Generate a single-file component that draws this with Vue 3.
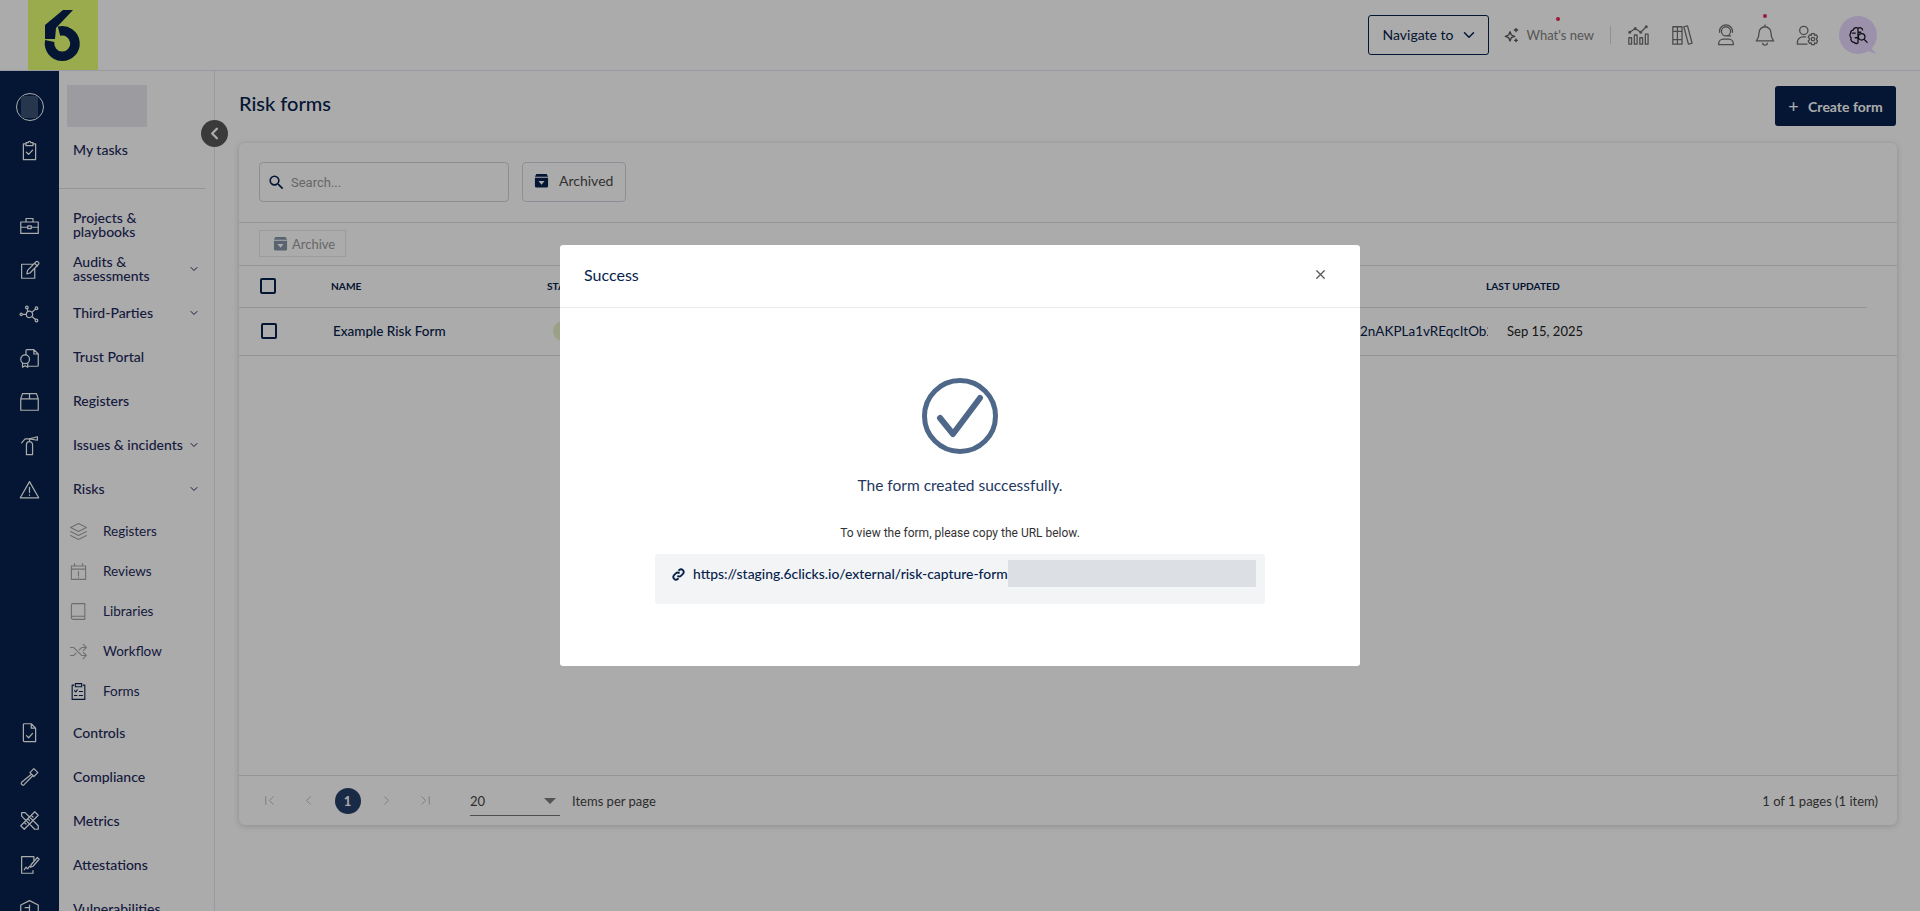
<script setup>
// circle as a path chunk, so one icon stays one d string
const c = (x, y, r) => `M${x - r} ${y}a${r} ${r} 0 1 0 ${2 * r} 0a${r} ${r} 0 1 0 ${-2 * r} 0`

const icons = {
  clipboard: 'M7.5 4.5H5v18h14v-18h-2.5 M8 3h2.5a1.5 1.5 0 0 1 3 0H16v3.5H8z M8.5 14l2.5 2.5 4.5-5',
  briefcase: 'M2 8h20v13H2z M8 8V4h8v4 M2 14h8 M14 14h8 M10 12.5h4v3h-4z',
  pencil: 'M16 6H3v16h15V11 M9 17l.8-4L19.5 3.2a1.5 1.5 0 0 1 2.2 0l.6.6a1.5 1.5 0 0 1 0 2.2L12.6 16z M18 5l3 3',
  nodes: c(12, 13, 3.6) + c(2.5, 13, 1.3) + c(9, 5, 1.5) + c(20, 6, 1.5) + c(20, 20, 1.5) + 'M3.8 13h4.6 M10 9.7l-.6-3.2 M14.8 10.6l4-3.6 M14.8 15.4l4 3.5',
  cert: 'M8 8V4a1 1 0 0 1 1-1h8l5 5v13a1 1 0 0 1-1 1H11 M17 3v5h5' + c(7, 14, 5) + 'M4 18.5V23l3-1.5 3 1.5v-4.5',
  box: 'M2 9l2-6h16l2 6v13H2z M2 9h20 M12 3v6',
  extinguisher: 'M8.5 22.5V11a3.5 3.5 0 0 1 7 0v11.5z M12 7.5V4 M12 4.5l9-2.5v4l-9-1.5 M12 4.5H7L3 9',
  warning: 'M12 3L1.5 21.5h21z M12 9.5v6 M12 18v.6',
  docCheck: 'M6 2h8l5 5v15.5H6a1 1 0 0 1-1-1V3a1 1 0 0 1 1-1z M14 2v5h5 M8.5 15.5l2.5 2.5 4.5-5',
  hammer: 'M12.5 7.5L17 3l4.5 4.5L17 12z M13.8 9.8L3 18.5a2 2 0 0 0 2.8 2.8l9.6-9.9',
  tools: 'M2 18L18 2l4 4L6 22z M6 14l2 2 M10 10l2 2 M14 6l2 2 M3 3h4l15 15v4h-4L3 7z',
  sign: 'M17 8V3H3v19h13v-3 M6 18l2-3 2 2 2-3 M13 15l1-3 7-8 2 2-7 8z',
  shield: 'M2 8l10-5 10 5v8l-10 6-10-6z M12 8v14 M7 11h5',
  layers: 'M12 2l10 5-10 5-10-5z M2 12l10 5 10-5 M2 17l10 5 10-5',
  calendar: 'M3 5h18v17H3z M3 9h18 M7 2v3 M17 2v3 M12 12v5 M12 19v.6',
  book: 'M5 2h15v16H5a2 2 0 0 0-2 2V4a2 2 0 0 1 2-2z M3 20a2 2 0 0 0 2 2h15v-4',
  shuffle: 'M2 7h4l10 10h5 M2 17h4l3-3 M13 10l3-3h5 M18 3l4 4-4 4 M18 13l4 4-4 4',
  forms: 'M6 4H4v18h16V4h-2 M8 2h8v4H8z M7 11l1.5 1.5 2-2.5 M13 12h4 M7 17h3 M13 17h4',
  chart: 'M2 15h3v7H2z M8 12h3v10H8z M14 15h3v7h-3z M20 11h3v11h-3z M3 9l6-4 6 4 6-6' + c(3, 9, 1) + c(9, 5, 1) + c(15, 9, 1) + c(21, 3, 1),
  books: 'M2 3h5v19H2z M7 3h5v19H7z M2 8h10 M2 17h10 M14 3l4-1 5 19-4 1z',
  support: c(12, 8, 5) + 'M4 22.5v-1a5 5 0 0 1 5-5h6a5 5 0 0 1 5 5v1z M5 9V8a7 7 0 0 1 14 0v1 M17 13h-4',
  bell: 'M12 3a6.5 6.5 0 0 0-6.5 6.5c0 6-2.5 8-3 9h19c-.5-1-3-3-3-9A6.5 6.5 0 0 0 12 3z M12 1v2 M9.5 21a2.5 2 0 0 0 5 0',
  userGear: c(8.5, 7, 4.5) + 'M1.5 22v-2a6 6 0 0 1 6-6h3 M1.5 22H12' + c(18.5, 16.5, 1.8) + 'M17 10.5h3l.4 2 1.8-.6 1.5 2.6-1.4 1.4v1.2l1.4 1.4-1.5 2.6-1.8-.6-.4 2h-3l-.4-2-1.8.6-1.5-2.6 1.4-1.4v-1.2l-1.4-1.4 1.5-2.6 1.8.6z',
  sparkle: 'M9 7l2 5 5 2-5 2-2 5-2-5-5-2 5-2z M18 2v5 M15.5 4.5h5 M18 18v4 M16 20h4',
  brain: 'M10 4a3 3 0 0 0-3 2.5A3.5 3.5 0 0 0 4 10a3.5 3.5 0 0 0 .5 5A3.5 3.5 0 0 0 8 20a2.5 2.5 0 0 0 4 .5V4.800A3 3 0 0 0 10 4z M12 4.800A3 3 0 0 1 17 6.500 M6 10h3 M9 15h3 M12 9h3' + c(16, 14, 3.6) + 'M18.600 16.600l3.400 3.400',
  chevronDown: 'M6 9l6 6 6-6',
  first: 'M6 6v12 M18 6l-6 6 6 6',
  prev: 'M15 6l-6 6 6 6',
  next: 'M9 6l6 6-6 6',
  last: 'M18 6v12 M6 6l6 6-6 6'
}

const railTop = ['briefcase', 'pencil', 'nodes', 'cert', 'box', 'extinguisher', 'warning']
const railBottom = ['docCheck', 'hammer', 'tools', 'sign', 'shield']

const menuTop = [
  { label: 'Projects & playbooks' },
  { label: 'Audits & assessments', arrow: true },
  { label: 'Third-Parties', arrow: true },
  { label: 'Trust Portal' },
  { label: 'Registers' },
  { label: 'Issues & incidents', arrow: true },
  { label: 'Risks', arrow: true }
]
const riskItems = [
  { label: 'Registers', icon: 'layers' },
  { label: 'Reviews', icon: 'calendar' },
  { label: 'Libraries', icon: 'book' },
  { label: 'Workflow', icon: 'shuffle' },
  { label: 'Forms', icon: 'forms', active: true }
]
const menuBottom = ['Controls', 'Compliance', 'Metrics', 'Attestations', 'Vulnerabilities']
const topIcons = ['chart', 'books', 'support', 'bell', 'userGear']
const searchPath = 'M15.5 14h-.79l-.28-.27A6.47 6.47 0 0 0 16 9.5 6.5 6.5 0 1 0 9.5 16c1.61 0 3.09-.59 4.23-1.57l.27.28v.79l5 4.99L20.49 19l-4.99-5zm-6 0C7.01 14 5 11.99 5 9.5S7.01 5 9.5 5 14 7.01 14 9.5 11.99 14 9.5 14z'
</script>

<template>
  <div class="app">
    <!-- Top bar -->
    <header class="topbar">
      <div class="logo">
        <svg width="70" height="70" viewBox="0 0 70 70">
          <path d="M35 10h10L28 28l-1 11H17V25z" fill="#06224c" />
          <path d="M21.750 41A12.750 12.750 0 1 0 31 31.200" fill="none" stroke="#06224c" stroke-width="9.500" />
        </svg>
      </div>
      <div class="top-right">
        <button class="navigate">
          Navigate to
          <svg class="ico nav-arrow" viewBox="0 0 24 24"><path :d="icons.chevronDown" /></svg>
        </button>
        <div class="whats-new">
          <svg class="ico sparkle" viewBox="0 0 24 24"><path :d="icons.sparkle" /></svg>
          <span>What's new</span>
          <i class="dot dot-new"></i>
        </div>
        <span class="top-sep"></span>
        <div v-for="name in topIcons" :key="name" class="top-icon" :class="name">
          <svg class="ico" viewBox="0 0 24 24"><path :d="icons[name]" /></svg>
          <i v-if="name === 'bell'" class="dot dot-bell"></i>
        </div>
        <div class="bubble">
          <svg class="bubble-bg" width="39" height="39" viewBox="0 0 39 39">
            <circle cx="19" cy="19" r="19" fill="#e8d9ff" />
            <path d="M28 28l10 10-12-4z" fill="#e8d9ff" />
          </svg>
          <svg class="ico brain" viewBox="0 0 24 24"><path :d="icons.brain" /></svg>
        </div>
      </div>
    </header>

    <div class="body">
      <!-- Icon rail -->
      <nav class="rail">
        <div class="avatar"><span></span></div>
        <div class="rail-item first-tasks">
          <svg class="ico" viewBox="0 0 24 24"><path :d="icons.clipboard" /></svg>
        </div>
        <div class="rail-group">
          <div v-for="name in railTop" :key="name" class="rail-item">
            <svg class="ico" viewBox="0 0 24 24"><path :d="icons[name]" /></svg>
          </div>
        </div>
        <div class="rail-group lower">
          <div v-for="name in railBottom" :key="name" class="rail-item">
            <svg class="ico" viewBox="0 0 24 24"><path :d="icons[name]" /></svg>
          </div>
        </div>
      </nav>

      <!-- Sidebar -->
      <aside class="sidebar">
        <div class="org-block"></div>
        <div class="menu-item">My tasks</div>
        <div class="menu-sep"></div>
        <div v-for="item in menuTop" :key="item.label" class="menu-item">
          <span class="menu-label">{{ item.label }}</span>
          <svg v-if="item.arrow" class="ico menu-arrow" viewBox="0 0 24 24"><path :d="icons.chevronDown" /></svg>
        </div>
        <div v-for="item in riskItems" :key="item.label" class="sub-item">
          <svg class="ico sub-icon" :class="{ active: item.active }" viewBox="0 0 24 24"><path :d="icons[item.icon]" /></svg>
          <span>{{ item.label }}</span>
        </div>
        <div v-for="label in menuBottom" :key="label" class="menu-item">{{ label }}</div>
        <button class="collapse">
          <svg class="ico" viewBox="0 0 24 24"><path :d="icons.prev" /></svg>
        </button>
      </aside>

      <!-- Content -->
      <main class="main">
        <div class="title-row">
          <h1>Risk forms</h1>
          <button class="create-btn"><span class="plus">+</span> Create form</button>
        </div>

        <section class="card">
          <div class="toolbar">
            <div class="search">
              <svg class="search-icon" viewBox="0 0 24 24"><path :d="searchPath" /></svg>
              <span>Search...</span>
            </div>
            <button class="archived">
              <svg class="archive-icon" viewBox="0 0 16 16">
                <path d="M1 5h14v9a1.500 1.500 0 0 1-1.500 1.500h-11A1.500 1.500 0 0 1 1 14z M2.500 1h11L15 4H1z" />
                <path d="M8 12.500L4.800 8.500h6.400z" fill="#fff" />
              </svg>
              Archived
            </button>
          </div>
          <div class="action-bar">
            <button class="archive-btn">
              <svg class="archive-icon small" viewBox="0 0 16 16">
                <path d="M1 5h14v9a1.500 1.500 0 0 1-1.500 1.500h-11A1.500 1.500 0 0 1 1 14z M2.500 1h11L15 4H1z" />
                <path d="M8 12.500L4.800 8.500h6.400z" fill="#fff" />
              </svg>
              Archive
            </button>
          </div>
          <div class="thead">
            <span class="cb"></span>
            <span>NAME</span>
            <span>STATUS</span>
            <span>LAST UPDATED</span>
          </div>
          <div class="trow">
            <span class="cb"></span>
            <span class="row-name">Example Risk Form</span>
            <span><i class="pill"></i></span>
            <span class="row-url">2nAKPLa1vREqcItOb2</span>
            <span></span>
            <span class="row-date">Sep 15, 2025</span>
          </div>
          <div class="spacer"></div>
          <div class="pager">
            <svg class="ico pg" viewBox="0 0 24 24"><path :d="icons.first" /></svg>
            <svg class="ico pg" viewBox="0 0 24 24"><path :d="icons.prev" /></svg>
            <span class="pg-wrap"><b class="page-num">1</b></span>
            <svg class="ico pg" viewBox="0 0 24 24"><path :d="icons.next" /></svg>
            <svg class="ico pg" viewBox="0 0 24 24"><path :d="icons.last" /></svg>
            <div class="per-page"><span>20</span><i class="caret"></i></div>
            <span class="per-label">Items per page</span>
            <span class="pg-info">1 of 1 pages (1 item)</span>
          </div>
        </section>
      </main>
    </div>

    <!-- Success dialog -->
    <div class="overlay">
      <div class="modal">
        <div class="modal-head">
          <span>Success</span>
          <svg class="ico close" viewBox="0 0 24 24"><path d="M6 6l12 12 M18 6L6 18" /></svg>
        </div>
        <div class="modal-body">
          <svg class="check" width="76" height="76" viewBox="0 0 76 76">
            <circle cx="38" cy="38" r="35.500" fill="none" stroke="#4f6788" stroke-width="5" />
            <path d="M18 40l13 16 27-36" fill="none" stroke="#4f6788" stroke-width="6" stroke-linecap="round" stroke-linejoin="round" />
          </svg>
          <p class="done">The form created successfully.</p>
          <p class="hint">To view the form, please copy the URL below.</p>
          <div class="url-box">
            <svg class="link-icon" viewBox="0 0 24 24">
              <path d="M10 14a5 5 0 0 0 7 0l3.500-3.500a5 5 0 0 0-7-7L12 5 M14 10a5 5 0 0 0-7 0l-3.500 3.500a5 5 0 0 0 7 7L12 19" />
            </svg>
            <span class="url-text">https://staging.6clicks.io/external/risk-capture-form</span>
            <span class="url-hidden"></span>
          </div>
        </div>
      </div>
    </div>
  </div>
</template>

<style>
html, body {
  margin: 0;
  background: #fff;
  overflow: hidden;
}
</style>

<style scoped>
.app {
  position: relative;
  height: 911px;
  overflow: hidden;
  font-family: Lato, "Liberation Sans", sans-serif;
  color: #06224c;
  background: #fff;
}

.ico {
  fill: none;
  stroke: currentColor;
  stroke-width: 1.4;
  stroke-linejoin: round;
  stroke-linecap: round;
  display: block;
}

/* Top bar */
.topbar {
  height: 70px;
  box-sizing: content-box;
  border-bottom: 1px solid #e4e4f0;
  display: flex;
  justify-content: space-between;
  padding-left: 28px;
}
.logo {
  width: 70px;
  height: 70px;
  background: #e6ff73;
}
.top-right {
  display: flex;
  align-items: center;
  padding-right: 42px;
}
.navigate {
  width: 121px;
  height: 40px;
  margin-top: -1px;
  border: 1px solid #06224c;
  border-radius: 3px;
  background: #fff;
  color: #06224c;
  font: 14px Lato, sans-serif;
  display: flex;
  align-items: center;
  padding: 0 0 0 14px;
  white-space: nowrap;
}
.nav-arrow {
  width: 18px;
  height: 18px;
  margin-left: 7px;
  stroke-width: 2;
}
.whats-new {
  position: relative;
  display: flex;
  align-items: center;
  margin-left: 15px;
  font-size: 13px;
  color: #808080;
}
.sparkle {
  width: 16px;
  height: 16px;
  margin-right: 7px;
  color: #555;
  stroke-width: 2;
}
.dot {
  position: absolute;
  width: 4px;
  height: 4px;
  border-radius: 50%;
  background: #e8284f;
}
.dot-new {
  top: -10px;
  left: 52px;
}
.dot-bell {
  top: -10px;
  left: 9px;
}
.top-sep {
  width: 1px;
  height: 18px;
  margin: 0 16px 0 16px;
  background: #d8d8d8;
}
.top-icon {
  position: relative;
  width: 22px;
  height: 22px;
  margin-right: 22px;
  color: #707070;
}
.top-icon.support {
  margin-right: 17px;
}
.top-icon.bell {
  margin-right: 20px;
}
.top-icon.userGear {
  margin-right: 21px;
}
.bubble {
  position: relative;
  width: 39px;
  height: 39px;
  display: flex;
  align-items: center;
  justify-content: center;
}
.bubble-bg {
  position: absolute;
  inset: 0;
}
.brain {
  position: relative;
  width: 22px;
  height: 22px;
  color: #16161c;
  margin-right: 1px;
}

/* Layout */
.body {
  display: flex;
  height: 840px;
  overflow: hidden;
}

/* Icon rail */
.rail {
  width: 59px;
  flex: none;
  background: #06224c;
  color: #fff;
  display: flex;
  flex-direction: column;
  align-items: center;
}
.avatar {
  width: 26px;
  height: 26px;
  flex: none;
  margin-top: 22px;
  border: 1px solid #fff;
  border-radius: 50%;
  display: flex;
  align-items: center;
  justify-content: center;
}
.avatar span {
  width: 17px;
  height: 22px;
  background: #3a5174;
  border-radius: 2px;
}
.rail-item {
  width: 59px;
  height: 44px;
  flex: none;
  display: flex;
  align-items: center;
  justify-content: center;
}
.rail-item .ico {
  width: 21px;
  height: 21px;
}
.first-tasks {
  margin-top: 7px;
}
.rail-group {
  margin-top: 31px;
}
.rail-group.lower {
  margin-top: 199px;
}

/* Sidebar */
.sidebar {
  position: relative;
  width: 155px;
  flex: none;
  border-right: 1px solid #e4e4f0;
  font-size: 14px;
  color: #1d2a5c;
}
.org-block {
  width: 80px;
  height: 42px;
  margin: 14px 0 1px 8px;
  background: #e9e9ef;
}
.menu-item {
  height: 44px;
  display: flex;
  align-items: center;
  justify-content: space-between;
  padding: 0 19px 0 14px;
  line-height: 14px;
  font-weight: 500;
}
.menu-label {
  max-width: 125px;
}
.menu-arrow {
  width: 12px;
  height: 12px;
  flex: none;
  stroke-width: 2;
  margin-right: -5px;
}
.menu-sep {
  height: 1px;
  margin: 16px 9px 14px 0;
  background: #e0e0e6;
}
.sub-item {
  height: 40px;
  display: flex;
  align-items: center;
  padding-left: 10px;
  font-size: 13.500px;
}
.sub-icon {
  width: 19px;
  height: 19px;
  margin-right: 15px;
  color: #a5a5a5;
}
.sub-icon.active {
  color: #06224c;
}
.collapse {
  position: absolute;
  top: 49px;
  right: -14px;
  z-index: 1;
  width: 27px;
  height: 27px;
  padding: 4px;
  border: 0;
  border-radius: 50%;
  background: #575757;
  color: #fff;
}
.collapse .ico {
  width: 19px;
  height: 19px;
  stroke-width: 3;
}

/* Content */
.main {
  flex: 1;
  min-width: 0;
  padding: 0 23px 0 24px;
}
.title-row {
  height: 57px;
  padding-top: 15px;
  display: flex;
  justify-content: space-between;
}
h1 {
  margin: 0;
  font-size: 20px;
  font-weight: 500;
  line-height: 34px;
  color: #06224c;
}
.create-btn {
  width: 121px;
  height: 40px;
  margin-right: 1px;
  border: 0;
  border-radius: 3px;
  background: #06224c;
  color: #fff;
  font: 700 14px Lato, sans-serif;
  white-space: nowrap;
}
.plus {
  font-weight: 400;
  font-size: 18px;
  margin-right: 6px;
  vertical-align: -1px;
}
.card {
  height: 682px;
  border-radius: 6px;
  box-shadow: 0 1px 6px rgba(0, 0, 0, 0.18);
  display: flex;
  flex-direction: column;
  background: #fff;
}
.toolbar {
  height: 80px;
  box-sizing: border-box;
  padding: 19px 20px;
  border-bottom: 1px solid #dfdfdf;
  display: flex;
  gap: 13px;
}
.search {
  width: 250px;
  height: 40px;
  box-sizing: border-box;
  border: 1px solid #d4d4d8;
  border-radius: 4px;
  display: flex;
  align-items: center;
  padding-left: 7px;
  color: #9a9a9a;
  font: 13px Roboto, sans-serif;
}
.search-icon {
  width: 19px;
  height: 19px;
  margin-right: 5px;
  fill: #06224c;
}
.archived {
  width: 104px;
  height: 40px;
  border: 1px solid #d4d4e2;
  border-radius: 4px;
  background: #fff;
  color: #4b4b4b;
  font: 14px Lato, sans-serif;
  display: flex;
  align-items: center;
  padding: 0 0 3px 11px;
}
.archive-icon {
  width: 15px;
  height: 15px;
  margin-right: 10px;
  fill: #06224c;
}
.action-bar {
  height: 43px;
  box-sizing: border-box;
  padding: 7px 20px 0;
  border-bottom: 1px solid #dfdfdf;
}
.archive-btn {
  width: 87px;
  height: 27px;
  border: 1px solid #e8e8e8;
  background: #fff;
  color: #9a9a9a;
  font: 13px Lato, sans-serif;
  display: flex;
  align-items: center;
  padding: 0 0 0 13px;
}
.archive-icon.small {
  margin-right: 4px;
  fill: #8694a8;
}
.thead {
  width: 1628px;
  height: 42px;
  box-sizing: border-box;
  padding: 0 0 2px 21px;
  border-bottom: 1px solid #dfdfdf;
  display: grid;
  grid-template-columns: 71px 216px 939px 1fr;
  align-items: center;
  font-size: 10.200px;
  font-weight: 700;
}
.trow {
  height: 48px;
  box-sizing: border-box;
  padding: 0 0 2px 22px;
  border-bottom: 1px solid #dfdfdf;
  display: grid;
  grid-template-columns: 72px 220px 807px 128px 19px 1fr;
  align-items: center;
  font-size: 13.500px;
}
.cb {
  width: 16px;
  height: 16px;
  box-sizing: border-box;
  border: 2px solid #06224c;
  border-radius: 2px;
}
.row-name {
  font-weight: 500;
}
.pill {
  display: block;
  width: 70px;
  height: 20px;
  border-radius: 10px;
  background: #e6f0c8;
}
.row-url {
  overflow: hidden;
  white-space: nowrap;
}
.row-date {
  color: #222;
  font-size: 13px;
}
.spacer {
  flex: 1;
}
.pager {
  height: 50px;
  box-sizing: border-box;
  flex: none;
  border-top: 1px solid #dfdfdf;
  padding-left: 11px;
  display: flex;
  align-items: center;
  font-size: 13px;
  color: #444;
}
.pg {
  box-sizing: border-box;
  width: 39px;
  height: 15px;
  color: #b4b4b4;
}
.pg-wrap {
  width: 39px;
  display: flex;
  justify-content: center;
}
.page-num {
  width: 26px;
  height: 26px;
  border-radius: 50%;
  background: #243f68;
  color: #fff;
  display: flex;
  align-items: center;
  justify-content: center;
  font-size: 13px;
}
.per-page {
  width: 90px;
  height: 28px;
  box-sizing: border-box;
  margin: 2px 0 0 25px;
  border-bottom: 1px solid #777;
  display: flex;
  align-items: center;
  justify-content: space-between;
  padding-right: 4px;
}
.caret {
  width: 0;
  height: 0;
  border-left: 6px solid transparent;
  border-right: 6px solid transparent;
  border-top: 6px solid #7d7d7d;
}
.per-label {
  margin-left: 12px;
}
.pg-info {
  margin-left: auto;
  padding-right: 19px;
}

/* Dialog */
.overlay {
  position: absolute;
  inset: 0;
  z-index: 5;
  background: rgba(0, 0, 0, 0.33);
  display: flex;
  align-items: center;
  justify-content: center;
}
.modal {
  width: 800px;
  background: #fff;
  border-radius: 3px;
}
.modal-head {
  height: 63px;
  box-sizing: border-box;
  padding: 0 32px 3px 24px;
  border-bottom: 1px solid #e9ebef;
  display: flex;
  align-items: center;
  justify-content: space-between;
  font-size: 16px;
  color: #06224c;
}
.close {
  width: 15px;
  height: 15px;
  color: #555;
  stroke-width: 2;
}
.modal-body {
  padding: 70px 95px 62px;
  display: flex;
  flex-direction: column;
  align-items: center;
}
.check {
  display: block;
}
.done {
  margin: 19px 0 0;
  font-size: 15.500px;
  line-height: 24px;
  color: #24375f;
}
.hint {
  margin: 28px 0 0;
  font: 12px/16px Roboto, sans-serif;
  color: #333;
}
.url-box {
  width: 610px;
  height: 50px;
  box-sizing: border-box;
  margin-top: 13px;
  padding: 6px 9px 0 17px;
  border-radius: 3px;
  background: #f3f4f5;
  display: flex;
  align-items: flex-start;
}
.link-icon {
  width: 13px;
  height: 13px;
  margin: 8px 8px 0 0;
  flex: none;
  fill: none;
  stroke: #06224c;
  stroke-width: 3.500;
}
.url-text {
  font-size: 13.900px;
  font-weight: 500;
  line-height: 28px;
  color: #06224c;
  white-space: nowrap;
}
.url-hidden {
  flex: 1;
  height: 27px;
  background: #dcdfe4;
}
</style>
